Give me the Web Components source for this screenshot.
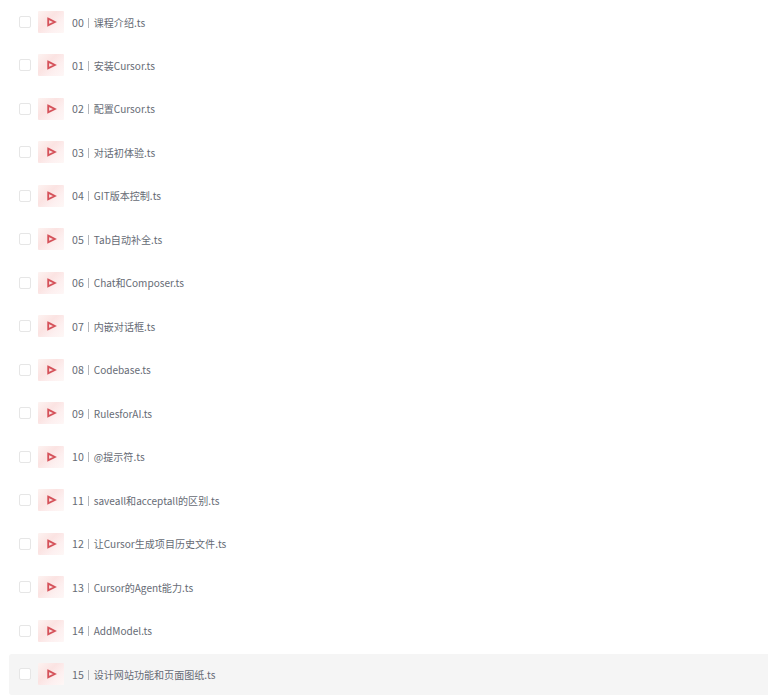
<!DOCTYPE html>
<html><head><meta charset="utf-8">
<style>html,body{margin:0;padding:0;background:#fff;overflow:hidden}</style>
</head><body>
<file-list></file-list>
<script>
class FileIcon extends HTMLElement{
  constructor(){super();this.attachShadow({mode:'open'}).innerHTML=`<style>
  :host{display:flex;align-items:center;justify-content:center;width:26px;height:22px;flex:none;
  background:linear-gradient(135deg,#fdf3f1 0%,#fbe3e2 40%,#fdf0f0 70%,#fef7f6 100%);border-radius:1px}
  svg{display:block;margin-left:1px}
  </style><svg width="10" height="10" viewBox="0 0 10 10"><path d="M1.2 1.6 L7.9 5 L1.2 8.4 Z" fill="#f9e2e2" stroke="#d5525a" stroke-width="1.8" stroke-linejoin="miter"/></svg>`;}
}
customElements.define('file-icon',FileIcon);
class FileRow extends HTMLElement{
  constructor(){super();this.attachShadow({mode:'open'}).innerHTML=`<style>
  :host{display:flex;align-items:center;height:41px;padding-left:10px;border-radius:3px 0 0 3px;
  font:10.05px/16px "Noto Sans CJK SC","Noto Sans",sans-serif;color:#666b75}
  :host([active]){background:#f5f5f5}
  .box{width:10px;height:10px;border:1px solid #e6e6e6;border-radius:2px;background:#fff;margin-right:7px;flex:none}
  .text{margin-left:8px;padding-top:1px;display:flex;align-items:center;white-space:nowrap}
  .num{font-size:10.6px}
  .sep{width:1px;height:10px;background:#b4b7bc;margin:0 5px 0 4px}
  </style><span class="box"></span><file-icon></file-icon><span class="text"><span class="num" id="n"></span><span class="sep"></span><slot></slot></span>`;}
  connectedCallback(){this.shadowRoot.getElementById('n').textContent=this.getAttribute('num');}
}
customElements.define('file-row',FileRow);
const items=['课程介绍.ts','安装Cursor.ts','配置Cursor.ts','对话初体验.ts','GIT版本控制.ts','Tab自动补全.ts','Chat和Composer.ts','内嵌对话框.ts','Codebase.ts','RulesforAI.ts','@提示符.ts','saveall和acceptall的区别.ts','让Cursor生成项目历史文件.ts','Cursor的Agent能力.ts','AddModel.ts','设计网站功能和页面图纸.ts'];
class FileList extends HTMLElement{
  constructor(){super();const s=this.attachShadow({mode:'open'});
  s.innerHTML=`<style>:host{display:flex;flex-direction:column;gap:2.47px;padding:1.5px 0 0 9px}</style>`;
  items.forEach((t,i)=>{const r=document.createElement('file-row');r.setAttribute('num',String(i).padStart(2,'0'));if(i==15)r.setAttribute('active','');r.textContent=t;s.appendChild(r);});}
}
customElements.define('file-list',FileList);
</script>
</body></html>
